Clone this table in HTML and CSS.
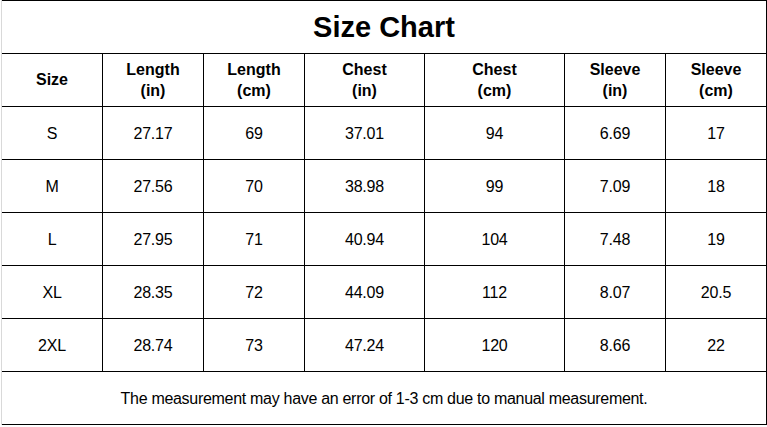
FILE: index.html
```html
<!DOCTYPE html>
<html>
<head>
<meta charset="utf-8">
<link rel="stylesheet" href="styles.css">
</head>
<body>
<div class="page">
  <div class="chart">
    <div class="cell title">Size Chart</div>
    <div class="cell head">Size</div>
    <div class="cell head">Length<br>(in)</div>
    <div class="cell head">Length<br>(cm)</div>
    <div class="cell head">Chest<br>(in)</div>
    <div class="cell head">Chest<br>(cm)</div>
    <div class="cell head">Sleeve<br>(in)</div>
    <div class="cell head">Sleeve<br>(cm)</div>

    <div class="cell">S</div><div class="cell">27.17</div><div class="cell">69</div><div class="cell">37.01</div><div class="cell">94</div><div class="cell">6.69</div><div class="cell">17</div>
    <div class="cell">M</div><div class="cell">27.56</div><div class="cell">70</div><div class="cell">38.98</div><div class="cell">99</div><div class="cell">7.09</div><div class="cell">18</div>
    <div class="cell">L</div><div class="cell">27.95</div><div class="cell">71</div><div class="cell">40.94</div><div class="cell">104</div><div class="cell">7.48</div><div class="cell">19</div>
    <div class="cell">XL</div><div class="cell">28.35</div><div class="cell">72</div><div class="cell">44.09</div><div class="cell">112</div><div class="cell">8.07</div><div class="cell">20.5</div>
    <div class="cell">2XL</div><div class="cell">28.74</div><div class="cell">73</div><div class="cell">47.24</div><div class="cell">120</div><div class="cell">8.66</div><div class="cell">22</div>

    <div class="cell note">The measurement may have an error of 1-3 cm due to manual measurement.</div>
  </div>
</div>
</body>
</html>
```
FILE: styles.css
```css
html, body {
  margin: 0;
  padding: 0;
  background: #ffffff;
}
body {
  font-family: "Liberation Sans", Arial, sans-serif;
  color: #000000;
  width: 767px;
  height: 427px;
  overflow: hidden;
}
.page {
  padding-left: 1px;
}
.chart {
  border-left: 1px solid #d9d9d9;
  display: grid;
  grid-template-columns: 101px 101px 101px 120px 140px 101px 101px;
  grid-template-rows: 54px repeat(7, 53px);
}
.cell {
  box-sizing: border-box;
  border-right: 1px solid #000;
  border-bottom: 1px solid #000;
  display: flex;
  align-items: center;
  justify-content: center;
  text-align: center;
  font-size: 16px;
  line-height: 21px;
  padding-top: 1px;
  letter-spacing: -0.2px;
}
.title {
  grid-column: 1 / -1;
  border-top: 1px solid #000;
  font-size: 29px;
  font-weight: bold;
  line-height: 32px;
  padding-top: 0;
  letter-spacing: 0;
}
.head {
  font-weight: bold;
  padding-top: 0;
  padding-bottom: 1px;
  letter-spacing: 0;
}
.note {
  grid-column: 1 / -1;
  letter-spacing: -0.3px;
}
```
